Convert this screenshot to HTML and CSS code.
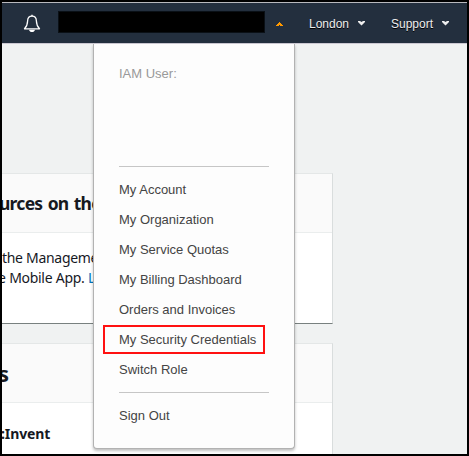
FILE: index.html
```html
<!DOCTYPE html>
<html lang="en">
<head>
<meta charset="utf-8">
<title>Console</title>
<link rel="stylesheet" href="styles.css">
</head>
<body>
<div class="frame">
  <header class="nav">
    <svg class="bell" width="18" height="19" viewBox="0 0 18 19">
      <path d="M9 2.200C6 2.200 4.700 4.300 4.600 7c-.1 3.500-.6 5.300-3.100 7.800h15c-2.500-2.500-3-4.300-3.100-7.800C13.300 4.300 12 2.200 9 2.200z" fill="none" stroke="#fff" stroke-width="1.300" stroke-linejoin="round"/>
      <path d="M8.300.8h1.400v1.400H8.300zM6 15.800h6c-.4 1.600-1.500 2.300-3 2.300s-2.600-.7-3-2.300z" fill="#fff"/>
    </svg>
    <div class="account"></div>
    <svg class="caret-up" width="7" height="4" viewBox="0 0 7 4"><path d="M3 0h1v1h1v1h1v1h1v1H4V3H3v1H0V3h1V2h1V1h1z" fill="#f90"/></svg>
    <span class="nav-item london">London</span>
    <svg class="caret" width="7" height="5" viewBox="0 0 7 5"><path d="M0 0h2l1.500 1L5 0h2v1L3.500 4.500 0 1z" fill="#eee"/></svg>
    <span class="nav-item support">Support</span>
    <svg class="caret" width="7" height="5" viewBox="0 0 7 5"><path d="M0 0h2l1.500 1L5 0h2v1L3.500 4.500 0 1z" fill="#eee"/></svg>
  </header>
  <main class="page">
    <section class="card first">
      <h2 class="card-head"><span>urces on the</span></h2>
      <div class="card-body">
        <p>the Manageme</p>
        <p class="second-line">e Mobile App. <a>L</a></p>
      </div>
    </section>
    <section class="card second">
      <h2 class="card-head big"><span>s</span></h2>
      <div class="card-body"><h3>:Invent</h3></div>
    </section>
  </main>
  <nav class="menu">
    <div class="user">IAM User:</div>
    <ul class="links">
      <li>My Account</li>
      <li>My Organization</li>
      <li>My Service Quotas</li>
      <li>My Billing Dashboard</li>
      <li>Orders and Invoices</li>
      <li class="marked">My Security Credentials</li>
      <li>Switch Role</li>
    </ul>
    <div class="sign-out">Sign Out</div>
  </nav>
</div>
</body>
</html>
```
FILE: styles.css
```css
* { box-sizing: border-box; }
body { margin: 0; }
.frame {
  position: relative;
  width: 469px;
  height: 456px;
  border: 2px solid #000;
  overflow: hidden;
  background: #f0f2f2;
  font-family: "Liberation Sans", Arial, sans-serif;
}
.nav {
  display: flex;
  align-items: center;
  height: 42px;
  padding-left: 21px;
  background: #232f3e;
  border-top: 1px solid #b9b9be;
  border-bottom: 1px solid #cbc8d2;
}
.bell { margin-top: 1px; }
.account { width: 207px; height: 22px; margin: -3px 11px 0 17px; background: #000; border: 1px solid #0a1016; }
.caret-up { margin: 2px 26px 0 0; }
.caret { margin-top: 1px; }
.nav-item {
  color: #eee;
  font-size: 12px;
  line-height: 16px;
  margin-top: 2px;
  text-shadow: 0 1px 0 #000;
}
.london { width: 49px; }
.support { width: 51px; margin-left: 26px; }
.page {
  padding-top: 129px;
  font-family: "Noto Sans", sans-serif;
  color: #16191f;
}
.card {
  width: 331px;
  background: #fff;
  border: 1px solid #e4e7e7;
  border-left: 0;
  border-right-color: #d9dddd;
}
.first { height: 151px; border-bottom-color: #78807f; }
.second { height: 120px; margin-top: 19px; }
.card-head {
  height: 59px;
  margin: 0;
  background: #fafafa;
  border-bottom: 1px solid #eaeded;
  font-size: 17.5px;
  line-height: 58px;
  letter-spacing: -.75px;
  word-spacing: 1.5px;
  white-space: nowrap;
}
.card-head span { display: inline-block; margin-left: -3px; }
.big { font-size: 22px; }
.big span { margin-left: -4px; }
.card-body { padding-top: 15px; font-size: 14px; line-height: 20px; letter-spacing: -.3px; }
.card-body p { margin: 0; }
.second-line { text-indent: -4px; word-spacing: .2px; }
.card-body a { color: #0073bb; }
.card-body h3 { margin: 6px 0 0 -1px; font-size: 14px; line-height: 20px; letter-spacing: -.1px; }
.menu {
  position: absolute;
  top: 42px;
  left: 91px;
  width: 202px;
  height: 405px;
  padding: 18px 25px;
  background: #fdfdfd;
  border: 1px solid #b2b2b2;
  border-top: 0;
  border-radius: 0 0 4px 4px;
  box-shadow: 0 2px 3px rgba(0, 0, 0, .25);
  color: #444;
  font-size: 13px;
}
.user { height: 104px; line-height: 24px; color: #999; }
.links {
  margin: 0;
  padding: 8px 0 7px;
  list-style: none;
  border-top: 1px solid #c6c6c6;
  border-bottom: 1px solid #c6c6c6;
}
.links li { height: 30px; line-height: 30px; white-space: nowrap; }
.links .marked {
  width: 162px;
  height: 29px;
  margin: 0 0 1px -16px;
  padding-left: 14px;
  line-height: 26px;
  border: 2px solid #f11;
}
.sign-out { margin-top: 8px; line-height: 30px; }
```
